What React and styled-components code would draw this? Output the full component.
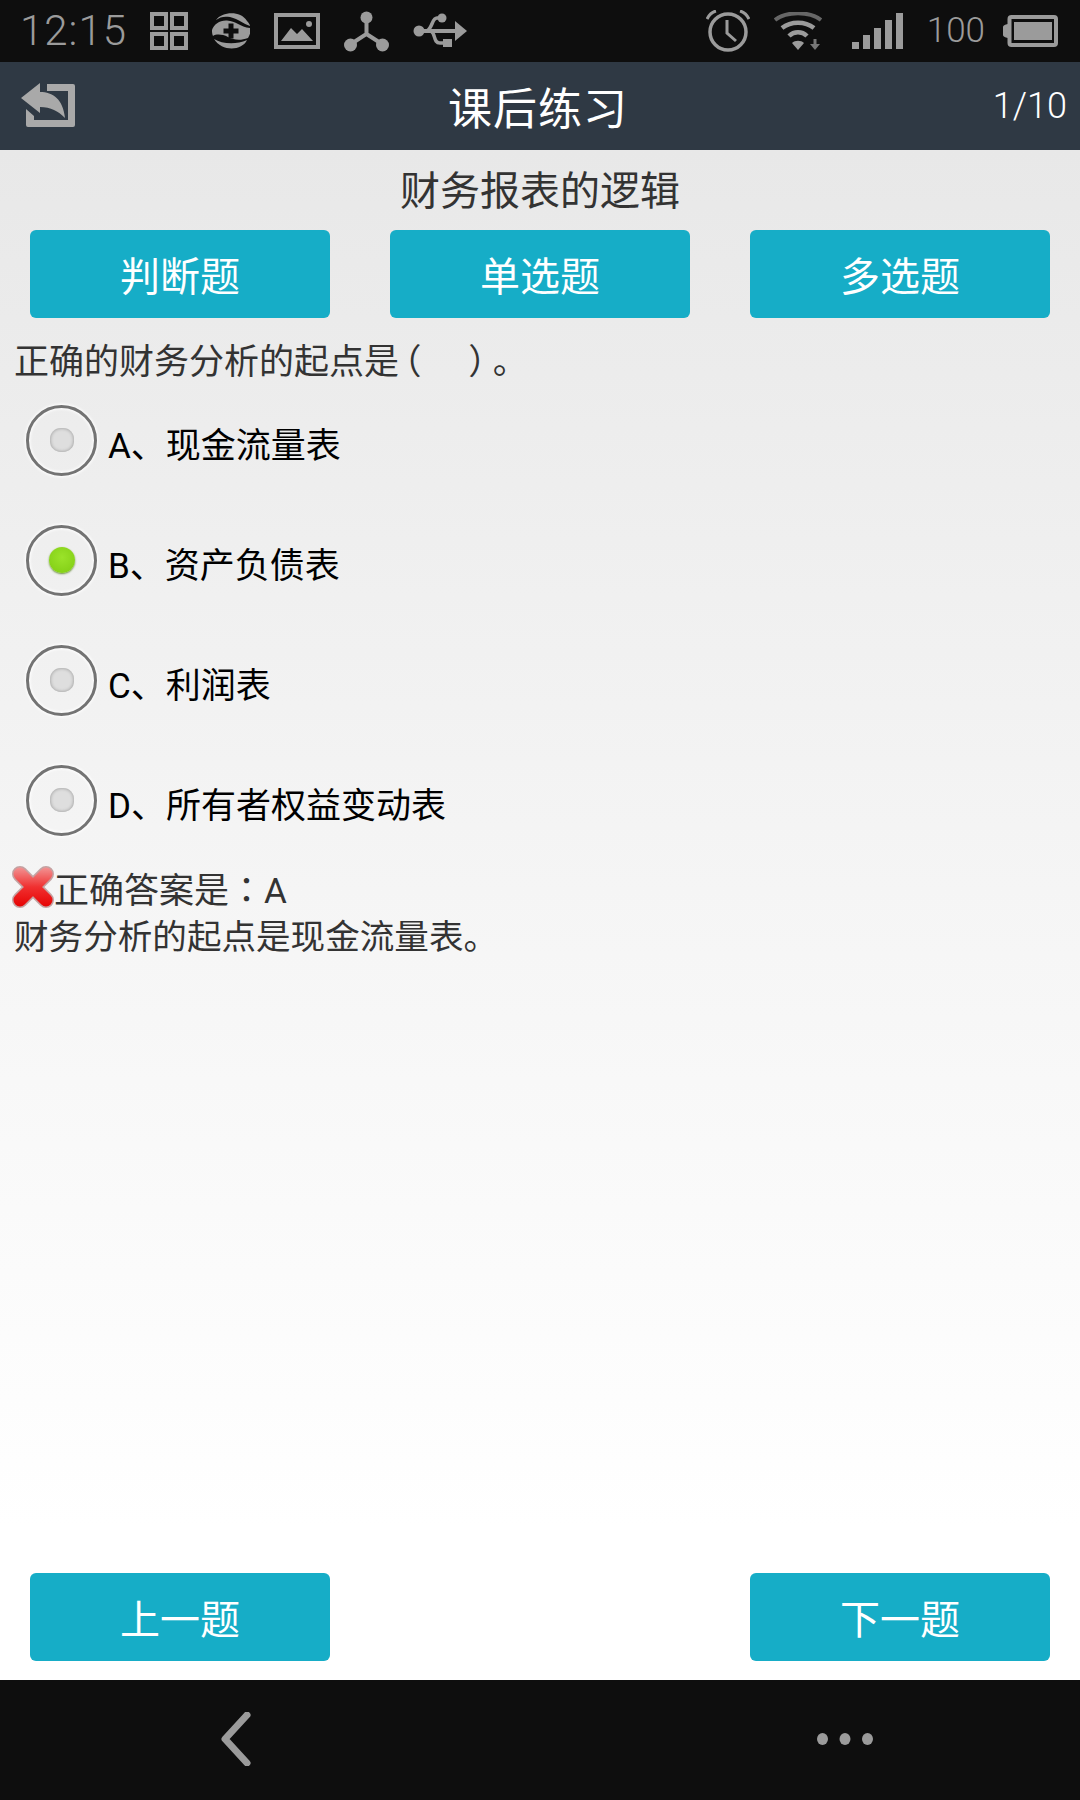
import React from 'react';
import styled, { createGlobalStyle } from 'styled-components';

const GlobalStyle = createGlobalStyle`
  html, body {
    margin: 0;
    padding: 0;
    background: #0e0e0e;
  }
  * {
    box-sizing: border-box;
  }
`;

const Page = styled.div`
  width: 1080px;
  height: 1800px;
  display: flex;
  flex-direction: column;
  font-family: Roboto, "Noto Sans CJK SC", sans-serif;
`;

const StatusBar = styled.div`
  height: 62px;
  flex: none;
  background: #0e0e0e;
  color: #9b9b9b;
  display: flex;
  align-items: center;
  justify-content: space-between;
  padding: 0 22px 0 20px;
`;

const StatusGroup = styled.div`
  display: flex;
  align-items: center;
  gap: 24px;
`;

const Clock = styled.span`
  font-size: 42px;
  font-weight: 300;
  letter-spacing: 1px;
  line-height: 62px;
  margin-right: -1px;
`;

const Level = styled.span`
  font-size: 35px;
  font-weight: 300;
  line-height: 62px;
  margin-right: -6px;
`;

const Glyph = styled.svg`
  display: block;
  flex: none;
  color: #9b9b9b;
  margin-right: ${(p) => p.$after || 0}px;
`;

const AppBar = styled.header`
  height: 88px;
  flex: none;
  background: #2f3944;
  display: grid;
  grid-template-columns: 427px auto 1fr;
  align-items: center;
  padding: 0 13px 0 21px;
`;

const BarTitle = styled.h1`
  margin: 0;
  font-size: 44px;
  font-weight: 400;
  color: #fff;
  letter-spacing: 1px;
`;

const Counter = styled.span`
  justify-self: end;
  font-size: 36px;
  font-weight: 300;
  color: #fff;
`;

const Content = styled.main`
  flex: 1;
  display: flex;
  flex-direction: column;
  background: linear-gradient(#e8e8e8 0%, #f3f3f3 40%, #fff 90%);
`;

const LessonTitle = styled.h2`
  margin: 0;
  height: 80px;
  padding-bottom: 4px;
  display: flex;
  align-items: center;
  justify-content: center;
  font-size: 40px;
  font-weight: 400;
  color: #333;
`;

const TypeRow = styled.div`
  display: flex;
  justify-content: space-between;
  padding: 0 30px;
`;

const ActionButton = styled.button`
  width: 300px;
  height: 88px;
  padding: 0;
  border: none;
  border-radius: 6px;
  background: #16adc7;
  color: #fff;
  font-family: inherit;
  font-size: 40px;
`;

const Question = styled.p`
  margin: 20px 0 0;
  padding-left: 14px;
  font-size: 35px;
  line-height: 50px;
  color: #333;
  white-space: pre;
`;

const Mark = styled.span`
  margin-left: ${(p) => p.$shift}px;
`;

// half-width opening bracket, it hugs the blank in the reference
const OpenBracket = styled.span`
  margin-left: 5px;
  font-feature-settings: "halt";
`;

const Options = styled.div`
  margin-top: -8px;
  display: flex;
  flex-direction: column;
`;

const Option = styled.label`
  height: 120px;
  display: flex;
  align-items: center;
  padding-left: 26px;
  gap: 11px;
  font-size: 35px;
  color: #000;
`;

const OptionText = styled.span`
  padding-top: 5px;
`;

const Ring = styled.span`
  width: 71px;
  height: 71px;
  border-radius: 50%;
  border: 3px solid #737373;
  box-shadow: 0 0 3px 1px #fff, inset 0 0 3px 1px #fff;
  display: flex;
  align-items: center;
  justify-content: center;
`;

const Dot = styled.span`
  width: ${(p) => (p.$on ? 26 : 24)}px;
  height: ${(p) => (p.$on ? 26 : 24)}px;
  border-radius: ${(p) => (p.$on ? '50%' : '45%')};
  background: ${(p) =>
    p.$on ? 'radial-gradient(circle at 50% 40%, #9be32a, #7fcb12)' : '#dedede'};
  box-shadow: ${(p) =>
    p.$on ? '0 1px 2px #6a8f3a' : 'inset 0 0 3px 1px #b0b0b0'};
`;

const Result = styled.div`
  margin-top: 5px;
  padding-left: 12px;
  height: 44px;
  display: flex;
  align-items: center;
  font-size: 35px;
  color: #333;
`;

// the colon sits in the middle of its cell here, as the TC face draws it
const CentredColon = styled.span`
  font-family: "Noto Sans CJK TC", sans-serif;
`;

const Explanation = styled.p`
  margin: 4px 0 0;
  padding-left: 14px;
  font-size: 34.6px;
  line-height: 48px;
  color: #333;
`;

const BottomRow = styled.div`
  margin-top: auto;
  display: flex;
  justify-content: space-between;
  padding: 0 30px 19px;
`;

const NavBar = styled.nav`
  height: 120px;
  flex: none;
  background: #0e0e0e;
  display: flex;
  align-items: center;
  justify-content: space-between;
  padding: 0 207px 2px 221px;
`;

const GridIcon = () => (
  <Glyph width="38" height="38" viewBox="0 0 38 38" fill="none" stroke="currentColor" strokeWidth="4">
    <rect x="2" y="2" width="14" height="14" />
    <rect x="22" y="2" width="14" height="14" />
    <rect x="2" y="22" width="14" height="14" />
    <rect x="22" y="22" width="14" height="14" />
  </Glyph>
);

const SwirlIcon = () => (
  <Glyph width="38" height="38" viewBox="0 0 38 38">
    <path d="M4 8 C10 0 28 -2 35 9 C37 11 38 13 38 14 C31 12 27 7 18 5 C12 4 8 5 4 8 Z" fill="currentColor" />
    <path d="M2 27 C10 32 24 33 35 28 C30 39 10 40 2 27 Z" fill="currentColor" />
    <path d="M0 18 C2 12 8 8 15 8.5 C24 9 28 15 38 16 C39 20 38 23 36 26 C28 29 22 28 16 25 C10 22 4 22 1 24 C0 22 0 20 0 18 Z" fill="currentColor" />
    <path d="M16.5 11.5h5v5h5v5h-5v5h-5v-5h-5v-5h5z" fill="#0e0e0e" />
  </Glyph>
);

const ImageIcon = () => (
  <Glyph width="46" height="36" viewBox="0 0 46 36">
    <rect x="2" y="2" width="42" height="32" fill="none" stroke="currentColor" strokeWidth="4" />
    <path d="M7 28 L17 15 L23 21 L28 16 L39 28 Z" fill="currentColor" />
    <circle cx="35" cy="11" r="3" fill="currentColor" />
  </Glyph>
);

const HubIcon = () => (
  <Glyph width="45" height="41" viewBox="0 0 45 41" fill="currentColor" stroke="currentColor">
    <path d="M22.5 7 V23 L7 33 M22.5 23 L38 33" fill="none" strokeWidth="4" />
    <circle cx="22.5" cy="6.5" r="6" stroke="none" />
    <circle cx="6.5" cy="34" r="6.5" stroke="none" />
    <circle cx="38.5" cy="34" r="6.5" stroke="none" />
  </Glyph>
);

const UsbIcon = () => (
  <Glyph width="54" height="36" viewBox="0 0 54 36">
    <path d="M6 18 H44" stroke="currentColor" strokeWidth="4" fill="none" />
    <path d="M42 8 L54 18 L42 28 Z" fill="currentColor" />
    <circle cx="6" cy="18" r="5.5" fill="currentColor" />
    <path d="M29 5 H24 C19 5 20 14 14 18 M18 18 C23 21 20 30 27 30 H32" stroke="currentColor" strokeWidth="3.5" fill="none" />
    <circle cx="29" cy="5" r="4.5" fill="currentColor" />
    <rect x="30" y="26" width="9" height="8" fill="currentColor" />
  </Glyph>
);

const AlarmIcon = () => (
  <Glyph width="44" height="42" viewBox="0 0 44 42" fill="none" stroke="currentColor">
    <circle cx="22" cy="22" r="18" strokeWidth="3.5" />
    <path d="M21 10 V23 L30 31" strokeWidth="3" />
    <path d="M1 9 C3 5 6 2 10 1 M34 1 C38 2 41 5 43 9" strokeWidth="3" />
  </Glyph>
);

const WifiIcon = () => (
  <Glyph $after={6} width="48" height="38" viewBox="0 0 48 38" fill="none" stroke="currentColor">
    <path d="M1 8 C13 -1 35 -1 47 8" stroke="#666" strokeWidth="4" />
    <path d="M8 16 C17 9 31 9 40 16" strokeWidth="4.5" />
    <path d="M15 24 C20 19 28 19 33 24" strokeWidth="4.5" />
    <path d="M18 31 C21 28 27 28 30 31 L24 38 Z" fill="currentColor" stroke="none" />
    <path d="M41 27 V33" stroke="#777" strokeWidth="3" />
    <path d="M36 32 H46 L41 38 Z" fill="#777" stroke="none" />
  </Glyph>
);

const SignalIcon = () => (
  <Glyph width="51" height="36" viewBox="0 0 51 36" fill="currentColor">
    <rect x="0" y="29" width="7" height="7" />
    <rect x="11" y="22" width="7" height="14" />
    <rect x="22" y="15" width="7" height="21" />
    <rect x="33" y="7" width="7" height="29" />
    <rect x="44" y="0" width="7" height="36" />
  </Glyph>
);

const BatteryIcon = () => (
  <Glyph width="55" height="32" viewBox="0 0 55 32">
    <path d="M0 12 Q0 10 5 9 V23 Q0 22 0 20 Z" fill="currentColor" />
    <rect x="6.5" y="2" width="46.5" height="28" rx="2" fill="none" stroke="currentColor" strokeWidth="4" />
    <rect x="11" y="7" width="38" height="18" fill="currentColor" />
  </Glyph>
);

const BackIcon = () => (
  <Glyph width="55" height="46" viewBox="0 0 55 46">
    <path d="M26 1 H52 Q54 1 54 3 V42 Q54 44 52 44 H7 Q5 44 5 42 V26 L13 33 V37 H47 V8 H26 Z" fill="#a9a9a9" />
    <path d="M0 15 L19 0 V9 C32 9 42 16 44 35 C37 28 30 24 19 24 V30 Z" fill="#a9a9a9" />
  </Glyph>
);

const CrossIcon = () => (
  <Glyph width="42" height="42" viewBox="0 0 42 42">
    <defs>
      <linearGradient id="crossFill" x1="0" y1="0" x2="0" y2="42" gradientUnits="userSpaceOnUse">
        <stop offset="0" stopColor="#f29a9a" />
        <stop offset="0.5" stopColor="#f03030" />
        <stop offset="1" stopColor="#e60000" />
      </linearGradient>
    </defs>
    <path d="M8 8 L34 34 M34 8 L8 34" stroke="#c4a2a2" strokeWidth="16" strokeLinecap="round" />
    <path d="M8 8 L34 34 M34 8 L8 34" stroke="url(#crossFill)" strokeWidth="13" strokeLinecap="round" />
  </Glyph>
);

const ChevronIcon = () => (
  <Glyph width="30" height="54" viewBox="0 0 30 54" fill="none" stroke="#9b9b9b">
    <path d="M26 3 L4 27 L26 51" strokeWidth="7" strokeLinecap="round" strokeLinejoin="round" />
  </Glyph>
);

const MoreIcon = () => (
  <Glyph width="56" height="12" viewBox="0 0 56 12" fill="#9b9b9b">
    <ellipse cx="5.5" cy="6" rx="5.5" ry="6" />
    <ellipse cx="28" cy="6" rx="5.5" ry="6" />
    <ellipse cx="50.5" cy="6" rx="5.5" ry="6" />
  </Glyph>
);

const options = [
  { key: 'A', text: 'A、现金流量表' },
  { key: 'B', text: 'B、资产负债表', on: true },
  { key: 'C', text: 'C、利润表' },
  { key: 'D', text: 'D、所有者权益变动表' },
];

const App = () => (
  <Page>
    <GlobalStyle />
    <StatusBar>
      <StatusGroup>
        <Clock>12:15</Clock>
        <GridIcon />
        <SwirlIcon />
        <ImageIcon />
        <HubIcon />
        <UsbIcon />
      </StatusGroup>
      <StatusGroup>
        <AlarmIcon />
        <WifiIcon />
        <SignalIcon />
        <Level>100</Level>
        <BatteryIcon />
      </StatusGroup>
    </StatusBar>
    <AppBar>
      <BackIcon />
      <BarTitle>课后练习</BarTitle>
      <Counter>1/10</Counter>
    </AppBar>
    <Content>
      <LessonTitle>财务报表的逻辑</LessonTitle>
      <TypeRow>
        <ActionButton>判断题</ActionButton>
        <ActionButton>单选题</ActionButton>
        <ActionButton>多选题</ActionButton>
      </TypeRow>
      <Question>
        正确的财务分析的起点是<OpenBracket>（</OpenBracket>    <Mark $shift={12}>）</Mark><Mark $shift={7}>。</Mark>
      </Question>
      <Options>
        {options.map((o) => (
          <Option key={o.key}>
            <Ring>
              <Dot $on={o.on} />
            </Ring>
            <OptionText>{o.text}</OptionText>
          </Option>
        ))}
      </Options>
      <Result>
        <CrossIcon />
        <span>
          正确答案是<CentredColon>：</CentredColon>A
        </span>
      </Result>
      <Explanation>财务分析的起点是现金流量表。</Explanation>
      <BottomRow>
        <ActionButton>上一题</ActionButton>
        <ActionButton>下一题</ActionButton>
      </BottomRow>
    </Content>
    <NavBar>
      <ChevronIcon />
      <MoreIcon />
    </NavBar>
  </Page>
);

export default App;
